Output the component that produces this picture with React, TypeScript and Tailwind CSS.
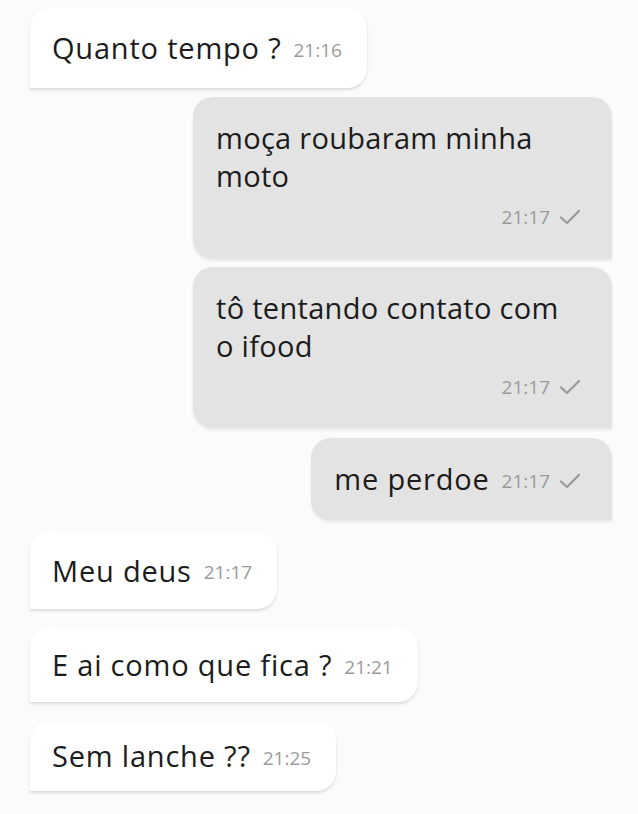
import React from "react";

function Check() {
  return (
    <svg width="24" height="16" viewBox="0 0 24 16" className="ml-2 shrink-0">
      <path
        d="M3 8.5 L9 14 L21 2"
        fill="none"
        stroke="#9a9a9a"
        strokeWidth="2.2"
        strokeLinecap="round"
        strokeLinejoin="round"
      />
    </svg>
  );
}

export default function App() {
  return (
    <div
      className="min-h-screen w-[638px] bg-[#fcfbfc] pt-[8px] pl-[30px] pr-[26px] flex flex-col text-[#1c1c1c]"
      style={{ fontFamily: '"Open Sans", sans-serif' }}
    >
      {/* incoming */}
      <div className="self-start flex items-center gap-3 bg-white rounded-[20px] rounded-bl-none shadow-[0_2px_3px_rgba(0,0,0,0.13)] pl-[22px] pr-[25px] h-[80px]">
        <span className="text-[29px] leading-[38px] tracking-[0.8px]">Quanto tempo ?</span>
        <span className="text-[19px] text-[#9a9a9a] mt-1">21:16</span>
      </div>

      {/* outgoing, two lines */}
      <div className="self-end mt-[9px] w-[419px] bg-[#e3e3e3] rounded-[20px] rounded-br-none shadow-[0_2px_3px_rgba(0,0,0,0.08)] pl-[23px] pr-[30px] pt-[22px] pb-[27px]">
        <p className="text-[29px] leading-[38px] tracking-[0.3px]">moça roubaram minha moto</p>
        <div className="flex justify-end items-center mt-[8px] text-[19px] text-[#9a9a9a]">
          21:17
          <Check />
        </div>
      </div>

      <div className="self-end mt-[8px] w-[419px] bg-[#e3e3e3] rounded-[20px] rounded-br-none shadow-[0_2px_3px_rgba(0,0,0,0.08)] pl-[23px] pr-[30px] pt-[22px] pb-[27px]">
        <p className="text-[29px] leading-[38px] tracking-[0.3px]">tô tentando contato com o ifood</p>
        <div className="flex justify-end items-center mt-[8px] text-[19px] text-[#9a9a9a]">
          21:17
          <Check />
        </div>
      </div>

      <div className="self-end mt-[10px] flex items-center gap-3 bg-[#e3e3e3] rounded-[20px] rounded-br-none shadow-[0_2px_3px_rgba(0,0,0,0.08)] pl-[23px] pr-[30px] h-[82px]">
        <span className="text-[29px] leading-[38px] tracking-[0.8px]">me perdoe</span>
        <span className="flex items-center text-[19px] text-[#9a9a9a] mt-1">
          21:17
          <Check />
        </span>
      </div>

      {/* incoming again */}
      <div className="self-start mt-[12px] flex items-center gap-3 bg-white rounded-[20px] rounded-bl-none shadow-[0_2px_3px_rgba(0,0,0,0.13)] pl-[22px] pr-[25px] h-[77px]">
        <span className="text-[29px] leading-[38px] tracking-[0.8px]">Meu deus</span>
        <span className="text-[19px] text-[#9a9a9a] mt-1">21:17</span>
      </div>

      <div className="self-start mt-[19px] flex items-center gap-3 bg-white rounded-[20px] rounded-bl-none shadow-[0_2px_3px_rgba(0,0,0,0.13)] pl-[22px] pr-[25px] h-[74px]">
        <span className="text-[29px] leading-[38px] tracking-[0.8px]">E ai como que fica ?</span>
        <span className="text-[19px] text-[#9a9a9a] mt-1">21:21</span>
      </div>

      <div className="self-start mt-[19px] flex items-center gap-3 bg-white rounded-[20px] rounded-bl-none shadow-[0_2px_3px_rgba(0,0,0,0.13)] pl-[22px] pr-[25px] h-[70px]">
        <span className="text-[29px] leading-[38px] tracking-[0.8px]">Sem lanche ??</span>
        <span className="text-[19px] text-[#9a9a9a] mt-1">21:25</span>
      </div>
    </div>
  );
}
